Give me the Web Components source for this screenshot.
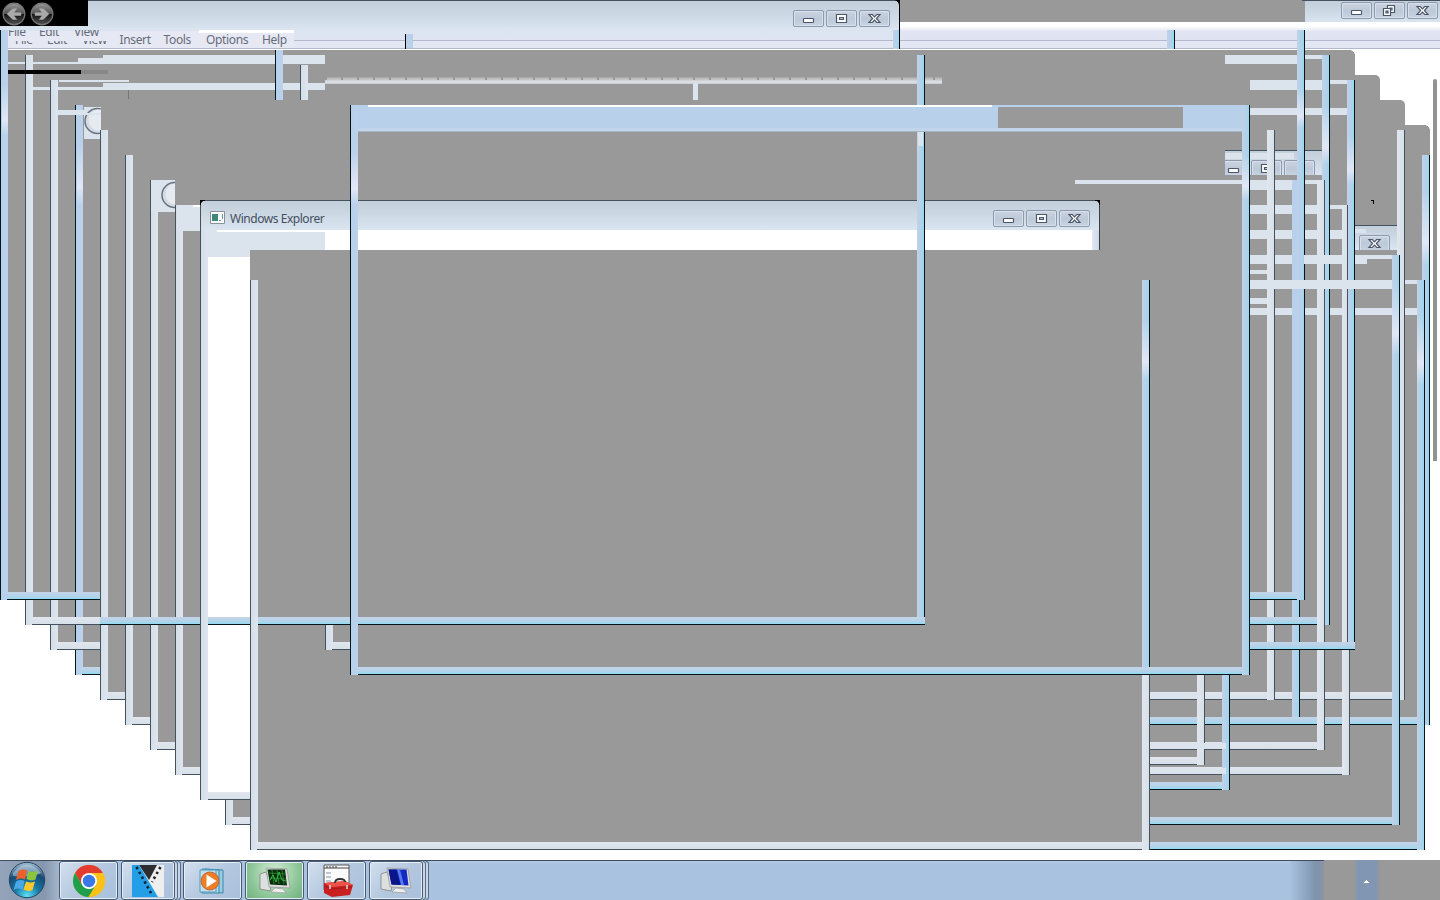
<!DOCTYPE html>
<html lang="en"><head><meta charset="utf-8"><title>Desktop</title>
<style>html,body{margin:0;height:100%;overflow:hidden;background:#fff}</style></head>
<body><desk-shell></desk-shell>
<script>
class Base extends HTMLElement{
  constructor(){super();this.attachShadow({mode:'open'})}
  paint(css,html){this.shadowRoot.innerHTML=`<style>${css}</style>${html}`}
}
// One visible piece of a window: a plain fill, a glass frame edge or a bar.
customElements.define('pane-piece',class extends Base{
  connectedCallback(){
    const [x,y,w,h]=this.getAttribute('at').split(' ');
    this.paint(`:host{display:block;position:absolute;box-sizing:border-box;left:${x}px;top:${y}px;width:${w}px;height:${h}px;overflow:hidden}
    :host([kind=gray]){background:#999}
    :host([kind=white]){background:#fff}
    :host([kind=black]){background:#000}
    :host([kind=pale]){background:#dbe3ec}
    :host([kind=sky]){background:#b9d0ea}
    :host([kind=LL]){background:linear-gradient(90deg,#45525e 1px,#d3dfe8 1px,#dfe5ef)}
    :host([kind=LR]){background:linear-gradient(90deg,#e2e6ee,#d6e0e9 calc(100% - 1px),#45525e calc(100% - 1px))}
    :host([kind=LB]){background:linear-gradient(#e2e6ee,#d6e0e9 calc(100% - 1px),#45525e calc(100% - 1px))}
    :host([kind=BL]){background:linear-gradient(90deg,#08131a 1px,#b2d3ea 1px,#bad0ee 60%,#bdd2e8)}
    :host([kind=BR]){background:linear-gradient(90deg,#bfd2e8,#b3d0ea 55%,#8fdcf0 calc(100% - 1px),#08131a calc(100% - 1px))}
    :host([kind=BB]){background:linear-gradient(#c4d5e8,#b3d3ea 55%,#8fdcf2 calc(100% - 1px),#08131a calc(100% - 1px))}
    :host([kind=shine]){background:linear-gradient(#e8f2fb00,#e1e7f6 70%,#e1e7f600)}
    :host([kind=cap]){background:linear-gradient(#c2ced8,#cbd8e3 45%,#dae5f0)}
    :host([kind=menu]){background:linear-gradient(#f4f6fb,#e0e4f1 35%,#dfe3f1 9px,#b3b9cb 9px,#b3b9cb 10px,#e4e8f4 10px,#e2e5f2 17px,#b3b9cb 17px,#b3b9cb 18px,#fff 18px)}`,'<slot></slot>');
  }});
customElements.define('caption-buttons',class extends Base{
  connectedCallback(){
    const st='fill="#fff" stroke="#4c5669" stroke-width="1.2"';
    const g={
      min:`<rect x="10.5" y="8.5" width="10" height="4" rx=".8" ${st}/>`,
      max:`<path fill-rule="evenodd" d="M10.5 4.500h10v8h-10zM13.500 7.500h4v2h-4z" ${st}/>`,
      res:`<path fill-rule="evenodd" d="M13.500 3.500h7v7h-7zM16 6h2v2h-2z" ${st}/><path fill-rule="evenodd" d="M9.500 6.500h7v7h-7zM12 9h2v2h-2z" ${st}/>`,
      close:`<path d="M10 4.500h3.300l2.200 2.300 2.200-2.300H21l-3.600 4 3.600 4h-3.300l-2.200-2.300-2.200 2.300H10l3.600-4z" ${st}/>`,
      none:''};
    this.paint(`:host{display:flex;gap:2px}span{box-sizing:border-box;flex:none;width:31px;height:17px;border:1px solid #8c99ae;border-radius:2px;background:linear-gradient(#cbd4e0,#bdc9d8 50%,#c7d3e1);box-shadow:inset 0 0 0 1px #d7e0eb}svg{display:block;margin:-1px}`,
    this.getAttribute('set').split(' ').map(k=>`<span><svg width="31" height="17">${g[k]}</svg></span>`).join(''));
  }});
customElements.define('menu-label',class extends Base{
  connectedCallback(){this.paint(`:host{display:block;position:absolute;white-space:nowrap;font:12px/16px "Noto Sans","Open Sans",sans-serif;color:#666b7a;letter-spacing:-.35px}`,'<slot></slot>')}});
customElements.define('nav-orb',class extends Base{
  connectedCallback(){
    this.paint(':host{display:block;width:24px;height:24px}:host([back]){transform:scaleX(-1)}',
    `<svg width="24" height="24"><defs><linearGradient id="g" x2="0" y2="1"><stop stop-color="#999"/><stop offset=".48" stop-color="#555"/><stop offset=".5" stop-color="#111"/><stop offset="1" stop-color="#555"/></linearGradient></defs><circle cx="12" cy="12" r="10.800" fill="url(#g)" stroke="#777" stroke-width="1.300"/><path d="M4.800 10.400h7L8.800 6.500h4.400l6 5.600-6 5.600H8.800l3-3.900h-7z" fill="#aaa"/></svg>`)}});
const icons={
chrome:`<svg width="32" height="32" viewBox="0 0 32 32"><circle cx="16" cy="16" r="16" fill="#fbc116"/><path d="M2.100 8A16 16 0 0 1 29.900 8L16 8.500 9 20z" fill="#e33b2e"/><path d="M2.100 8A16 16 0 0 0 15.500 32L23 20 16 24 9.100 20z" fill="#1f9e4b"/><path d="M16 8h13.900A16 16 0 0 1 15.500 32L23 20z" fill="#fbc116"/><circle cx="16" cy="16" r="8" fill="#fff"/><circle cx="16" cy="16" r="6.200" fill="#3b78e7"/></svg>`,
film:`<svg width="32" height="32" viewBox="0 0 32 32"><path fill="#eee" d="M0 0h32v32H0z"/><path fill="#2b2d31" d="M7 0h18l-8 15z"/><path fill="#229fe6" d="M0 0h7l19 32H0z"/><path d="M4.500 2l15 27" stroke="#123" stroke-width="2.600" stroke-dasharray="2.500 3"/><path d="M28.500 2L20 17" stroke="#222" stroke-width="2.600" stroke-dasharray="2.500 3"/></svg>`,
media:`<svg width="32" height="32" viewBox="0 0 32 32"><path d="M8 4l18 1v23l-18-1z" fill="#9fcbe0" stroke="#3687ac"/><path d="M5 4l17 1v23H5z" fill="#b5d7e8" stroke="#3687ac"/><path d="M3 5h16v22H3z" fill="#c5deea" stroke="#4f9dbc"/><circle cx="13" cy="16" r="9" fill="#ee7d24" stroke="#b9683a"/><path d="M9.500 9.500v13l10-6.500z" fill="#fff"/></svg>`,
green:`<svg width="34" height="32" viewBox="0 0 34 32"><path d="M2 9l6-2 5 14-1 5-10-2z" fill="#dce0df" stroke="#777" stroke-width=".7"/><path d="M8 3l21 1 3 19-21-1z" fill="#ddd" stroke="#999" stroke-width=".8"/><path d="M9.500 4.500h17.500l2 16-17-1z" fill="#07310e"/><path d="M11 8l17 1M12 13l16 1M14 5l2 14M19 5l2 14M24 5l2 14" stroke="#2d8b32" stroke-width=".8"/><path d="M12 15l3-5 3 7 3-10 3 8 4 1" fill="none" stroke="#35b93e"/><path d="M17 23l8 1 3 4-15-1z" fill="#eee" stroke="#999" stroke-width=".7"/></svg>`,
tool:`<svg width="32" height="34" viewBox="0 0 32 34"><path d="M3 1h25v25H3z" fill="#fafafa" stroke="#555"/><path d="M3 4h25M6 2v2M9 2v2M12 2v2M15 2v2" stroke="#444"/><path d="M5 9h5M5 13h5M5 17h5" stroke="#8292a8"/><path d="M3 19l21-2 8 4-3 10-18 2-8-4z" fill="#c91f20"/><path d="M3 19l21-2 8 4-22 2z" fill="#ec5449"/><path d="M14 19q0-4 5-4t5 3" fill="none" stroke="#333" stroke-width="1.800"/><path d="M3 22l8 3 20-2" stroke="#a11a1e" fill="none"/><path d="M9 21v4M26 21v4" stroke="#ddd" stroke-width="1.500"/></svg>`,
blue:`<svg width="34" height="32" viewBox="0 0 34 32"><path d="M2 9l6-2 5 14-1 5-10-2z" fill="#dce0df" stroke="#777" stroke-width=".7"/><path d="M8 3l21 1 3 19-21-1z" fill="#ddd" stroke="#999" stroke-width=".8"/><path d="M9.500 4.500h18l2 16-17-1z" fill="#1329c2"/><path d="M9.500 4.500h8l4 15.500-9-.5z" fill="#0a158a"/><path d="M18 4.500h3l4 15.500h-3z" fill="#5879ef"/><path d="M17 23l8 1 3 4-15-1z" fill="#eee" stroke="#999" stroke-width=".7"/></svg>`};
customElements.define('task-button',class extends Base{
  connectedCallback(){
    this.paint(`:host{display:flex;flex:none;height:39px;width:62px}
    div{box-sizing:border-box;width:59px;height:39px;border:1px solid #4a5a70;border-radius:3px;box-shadow:inset 0 0 0 1px #e3edf7;background:linear-gradient(135deg,#d3e0ef,#b4c8df 50%,#a9c0dc);display:flex;align-items:center;justify-content:center}
    :host([stack]) div{width:54px}
    i{display:none;width:3px;height:39px;box-sizing:border-box;border:solid #5a6b82;border-width:1px 1px 1px 0;background:#c6d6e8;border-radius:0 3px 3px 0}
    :host([stack]) i{display:block}:host([hot]) div{background:radial-gradient(circle at 50% 30%,#d7efd8,#8fc79a 60%,#6daf7c)}`,
    `<div>${icons[this.getAttribute('icon')]}</div>${this.hasAttribute('stack')?'<i></i><i></i>':''}`)}});
customElements.define('task-bar',class extends Base{
  connectedCallback(){
    this.paint(`:host{display:flex;height:40px;box-sizing:border-box;border-top:1px solid #414d5e;background:#a8c2df;position:relative}
    .start{width:59px;flex:none;background:linear-gradient(90deg,#93a4bb,#8596ad 75%,#a4b6cd);display:flex;justify-content:center;padding-right:6px;box-sizing:border-box}
    .space{flex:1;background:linear-gradient(#b4c9e2,#a8c2df 4px)}.fade{width:34px;background:linear-gradient(90deg,#a8c2df,#7e93ad 75%,#8996a5)}
    .tray{width:116px;margin-top:-1px;background:linear-gradient(90deg,#999 30px,#8096b2 34px,#8096b2 52px,#999 56px)}.tray svg{display:block;margin:18px 0 0 37px}`,
    `<div class="start"><svg width="38" height="38" viewBox="0 0 38 38"><defs><radialGradient id="o" cx=".5" cy=".95" r=".9"><stop stop-color="#5de1f5"/><stop offset=".4" stop-color="#1678a8"/><stop offset=".75" stop-color="#174a72"/><stop offset="1" stop-color="#8fb0c8"/></radialGradient></defs><circle cx="19" cy="19" r="17.700" fill="url(#o)" stroke="#28455f"/><path d="M5 12Q19-5 33 12 25 17 5 15z" fill="#d1e4ef" opacity=".5"/><path d="M10.500 10q4.500-2.500 8.500-.5l-2 9q-4.500-2-9 .5z" fill="#ed602a"/><path d="M20.500 10q4.500 2 9.500-.5l-2.500 9q-4.500 2-9-.5z" fill="#8cc63f"/><path d="M8 20.500q4.500-2.500 8.500-.5l-2 8.500q-4.500-2-9 .5z" fill="#49a9e8"/><path d="M18 20.500q4.500 2 9 0l-2.500 8.500q-4 2-9-.5z" fill="#fdc62d"/></svg></div>
    <task-button icon="chrome"></task-button><task-button stack icon="film"></task-button><task-button icon="media"></task-button><task-button hot icon="green"></task-button><task-button icon="tool"></task-button><task-button stack icon="blue"></task-button>
    <div class="space"></div><div class="fade"></div><div class="tray"><svg width="11" height="7"><path d="M1.500 5.500l4-4 4 4z" fill="#fff" stroke="#697f9a" stroke-width=".6"/></svg></div>`)}});
const P=(k,...l)=>l.map(a=>`<pane-piece kind="${k}" at="${a}"></pane-piece>`).join('');
customElements.define('desk-shell',class extends Base{
  connectedCallback(){
    this.paint(`:host{display:grid;grid-template-rows:860px 40px;width:1440px;height:900px;background:#fff}
    .desk{position:relative;overflow:hidden}
    .a{position:absolute}.orbs{display:flex;gap:4px;left:2px;top:2px}
    .dots{left:325px;top:77px;width:617px;height:7px;background:repeating-linear-gradient(90deg,#999 0 2px,transparent 2px 16px) 0 0/100% 3px no-repeat,linear-gradient(#a5a5a5,#e0e3e7 70%,#c5ccd3)}
    .clip{overflow:hidden}.r{border-radius:0 5px 0 0}`,
    `<div class="desk">`
    // stacked client areas
    +P('gray','1 50 1354 550','26 75 1329 550','51 100 1304 550','76 125 1354 550','101 150 1329 550','126 175 1304 550','151 200 1274 550','176 225 1249 550','226 275 1199 550','251 250 1174 600')
    +`<div class="a" style="left:1350px;top:50px;width:5px;height:5px;background:radial-gradient(circle at 0 100%,#999 4.500px,#fff 5px)"></div>
    <div class="a r" style="left:1355px;top:75px;width:25px;height:60px;background:#999"></div><div class="a r" style="left:1355px;top:100px;width:50px;height:60px;background:#999"></div><div class="a" style="left:1405px;top:125px;width:25px;height:20px;background:#999"></div><div class="a" style="left:1425px;top:125px;width:5px;height:5px;background:radial-gradient(circle at 0 100%,#999 4.500px,#fff 5px)"></div>`
    +P('gray','1355 150 75 575','900 0 405 22')
    +`<div class="a" style="left:1433px;top:79px;width:4px;height:382px;border-radius:2px 2px 0 0;background:#929292"></div>`
    // top window
    +P('cap','0 0 900 31','1305 0 135 23')
    +`<div class="a" style="left:0;top:0;width:899px;height:1px;background:#46515f"></div><div class="a" style="left:1302px;top:0;width:138px;height:1px;background:#46515f"></div>`
    +P('menu','0 31 900 19','900 31 540 19')+P('white','900 22 540 7')
    +`<div class="a" style="left:900px;top:26px;width:540px;height:12px;background:linear-gradient(#fff,#e0e4f1 50%)"></div><div class="a" style="left:88px;top:28px;width:811px;height:12px;background:linear-gradient(#dae5f0,#dfe4f1)"></div>`
    +`<div class="a" style="left:8px;top:31px;width:286px;height:17px;background:#e6e9f4"></div>`+P('white','199 30 95 3')
    +P('black','0 0 88 26','405 34 1 15')+P('sky','406 34 7 14')
    +`<div class="a orbs"><nav-orb back></nav-orb><nav-orb></nav-orb></div>
    <div class="a clip" style="left:8px;top:30px;width:102px;height:7px"><menu-label style="left:0px;top:-6px">File</menu-label><menu-label style="left:31px;top:-6px">Edit</menu-label><menu-label style="left:66px;top:-6px">View</menu-label></div>
    <div class="a clip" style="left:0;top:41px;width:110px;height:5px"><menu-label style="left:15px;top:-9px">File</menu-label><menu-label style="left:47px;top:-9px">Edit</menu-label><menu-label style="left:82px;top:-9px">View</menu-label></div>
    <menu-label style="left:119.5px;top:32px">Insert</menu-label><menu-label style="left:163.500px;top:32px">Tools</menu-label><menu-label style="left:206px;top:32px">Options</menu-label><menu-label style="left:262px;top:32px">Help</menu-label>
    <caption-buttons class="a" style="left:793px;top:10px" set="min max close"></caption-buttons><caption-buttons class="a" style="left:1341px;top:2px" set="min res close"></caption-buttons>
    <div class="a" style="left:894px;top:0;width:6px;height:5px;background:radial-gradient(circle at 0 100%,transparent 4.500px,#000 5px)"></div>`
    +P('BR','893 30 7 19','1167 30 8 19')+P('black','899 5 1 44')
    // upper left remnants
    +P('BL','0 30 8 570')+P('shine','2 85 6 50')
    +P('pale','8 62 317 2','78 58 247 6','103 55 222 9','33 87 292 3','103 83 222 7','59 80 70 2')
    +P('LL','25 55 8 570','50 80 8 570')+P('BL','75 105 8 570')+P('shine','77 145 6 60')
    +P('pale','58 110 43 5')+`<div class="a dots"></div>`+P('pale','693 83 5 17')
    +`<div class="a" style="left:128px;top:90px;width:1px;height:9px;background:#777"></div><div class="a" style="left:81px;top:70px;width:27px;height:4px;background:#888"></div>`
    +P('black','8 70 73 4')+P('BL','275 50 8 50')+P('LL','300 65 8 35')
    +[[84,107,17,32,96,121],[152,180,23,32,173,195]].map(([x,y,w,h,cx,cy])=>`<pane-piece kind="pale" at="${x} ${y} ${w} ${h}"><svg width="${w}" height="${h}"><circle cx="${cx-x+1.500}" cy="${cy-y}" r="12.500" fill="#d4dbe3" stroke="#667180" stroke-width="1.500"/><circle cx="${cx-x+3}" cy="${cy-y-1}" r="10.500" fill="#e6eaf1"/></svg></pane-piece>`).join('')
    +P('pale','84 113 17 2')
    +P('LL','100 130 8 570','125 155 8 570','150 180 8 570')+P('pale','151 180 7 32','177 205 24 26')+P('white','193 205 8 2')+P('LL','175 205 8 570')
    +P('pale','177 205 7 26')
    // lower left corners
    +P('BB','7 592 93 8')+P('LB','32 617 68 8','57 642 43 8','107 692 18 8','132 717 18 8','157 742 18 8','182 767 18 8')+P('BB','82 667 18 8')
    +P('LL','225 800 8 25','325 625 8 25')+P('LB','232 817 18 8','332 642 18 8')
    // right cascade
    +P('cap','1225 150 97 25')+`<div class="a" style="left:1225px;top:150px;width:97px;height:1px;background:#46515f"></div><div class="a" style="left:1225px;top:160px;width:25px;height:1px;background:#8b98ac"></div>
    <div class="a clip" style="left:1225px;top:160px;width:97px;height:15px"><caption-buttons style="margin-left:-7px" set="min max none"></caption-buttons></div>`
    +P('pale','1225 153 69 6','1225 55 79 9','1304 55 22 4','1250 82 80 8','1250 80 98 4','1250 108 98 7','1075 180 243 4','1250 180 42 10','1250 205 68 9','1325 205 23 4','1250 230 93 9')
    +P('cap','1355 225 42 25')+`<div class="a" style="left:1355px;top:225px;width:42px;height:1px;background:#46515f"></div><div class="a clip" style="left:1359px;top:235px;width:32px;height:15px"><caption-buttons set="close"></caption-buttons></div>`
    +P('pale','1355 229 11 4','1250 255 117 9','1250 255 144 4','1250 270 18 4','1250 280 143 9','1404 280 13 4','1250 298 18 6','1250 308 167 7')
    +P('LB','1150 692 255 8','1150 742 175 8','1150 757 55 8','1150 767 200 8')
    +P('LR','1267 130 8 570')+P('BR','1292 180 8 545')
    +P('BB','1150 717 280 8','1150 782 80 8','1250 592 55 8','1250 617 80 8')
    +P('LR','1397 130 8 570')+P('BR','1422 155 8 570')+P('shine','1422 190 7 75')
    +P('BR','1322 55 8 570')+P('shine','1322 105 7 60')+P('LR','1342 205 8 570')
    +P('BR','1297 30 8 570')+P('shine','1297 88 7 40')+P('sky','1292 184 11 408')+P('LR','1317 180 8 570')
    +P('BR','1347 80 8 570')+P('shine','1347 135 7 50')+P('LR','1342 205 6 437')
    +P('BB','1250 642 105 8')+P('LR','1197 675 8 90')+P('BR','1222 675 8 115')
    +P('BB','1150 817 250 8','1150 842 275 8')
    +P('BR','1392 255 8 570')+P('shine','1392 285 7 70')+P('BR','1417 280 8 570')+P('shine','1417 315 7 70')
    +P('pale','1267 205 7 9','1267 230 7 9','1304 255 43 9','1267 280 125 9','1150 693 52 6','1150 743 76 6','1150 768 76 6')
    +P('black','1371 200 3 1','1373 200 1 4')
    // Explorer window
    +P('white','208 230 884 20','201 250 50 550')+P('cap','201 200 899 30')
    +`<div class="a" style="left:201px;top:200px;width:899px;height:1px;background:#46515f"></div><div class="a" style="left:1092px;top:230px;width:7px;height:20px;background:linear-gradient(90deg,#e3e6f4,#cdd9e5)"></div><div class="a" style="left:1099px;top:203px;width:1px;height:47px;background:#33404c"></div><div class="a" style="left:1095px;top:200px;width:5px;height:5px;background:radial-gradient(circle at 0 100%,transparent 4px,#000 4.500px)"></div>`
    +P('pale','202 230 123 20','202 250 49 7')+P('white','217 230 108 2')+P('LL','200 204 8 596')+P('LB','208 792 43 8')
    +`<div class="a" style="left:201px;top:203px;width:7px;height:27px;background:linear-gradient(#c4d0da,#dae5f0)"></div><div class="a" style="left:200px;top:200px;width:5px;height:5px;background:radial-gradient(circle at 100% 100%,transparent 4px,#000 4.500px)"></div>
    <svg class="a" style="left:210px;top:211px" width="16" height="14"><path d="M.5.500h14v12H.5z" fill="#f8fafa" stroke="#8a9299"/><path d="M2 3h6v7H2z" fill="#418679"/><path d="M9 9h2v1H9zM12 3h1v5h-1z" fill="#699"/></svg>
    <menu-label style="left:230px;top:211px;color:#454f5e;letter-spacing:-.46px">Windows Explorer</menu-label>
    <caption-buttons class="a" style="left:993px;top:210px" set="min max close"></caption-buttons>`
    +P('gray','250 250 850 30')
    // front frames
    +P('BR','917 55 8 570')+P('BB','100 617 825 8')+P('LL','200 610 8 20')
    +P('LL','250 280 8 570')+P('LB','257 842 893 8')+P('BR','1142 280 8 395')+P('LR','1142 675 8 175')+P('shine','1142 320 7 60')+P('gray','1142 270 8 10')
    +P('sky','351 105 899 26')+P('white','368 105 624 2')+P('gray','998 107 185 21')
    +`<div class="a" style="left:358px;top:128px;width:884px;height:4px;background:linear-gradient(#bcd1eb,#c9d9ea 60%,#91a6bb)"></div>`
    +P('BB','351 667 899 8')+P('BL','350 105 8 570')+P('shine','351 150 7 55')+P('BR','1242 105 8 570')+P('shine','1242 155 7 45')
    +P('pale','918 132 5 14')
    +`</div><task-bar></task-bar>`)}});
</script></body></html>
